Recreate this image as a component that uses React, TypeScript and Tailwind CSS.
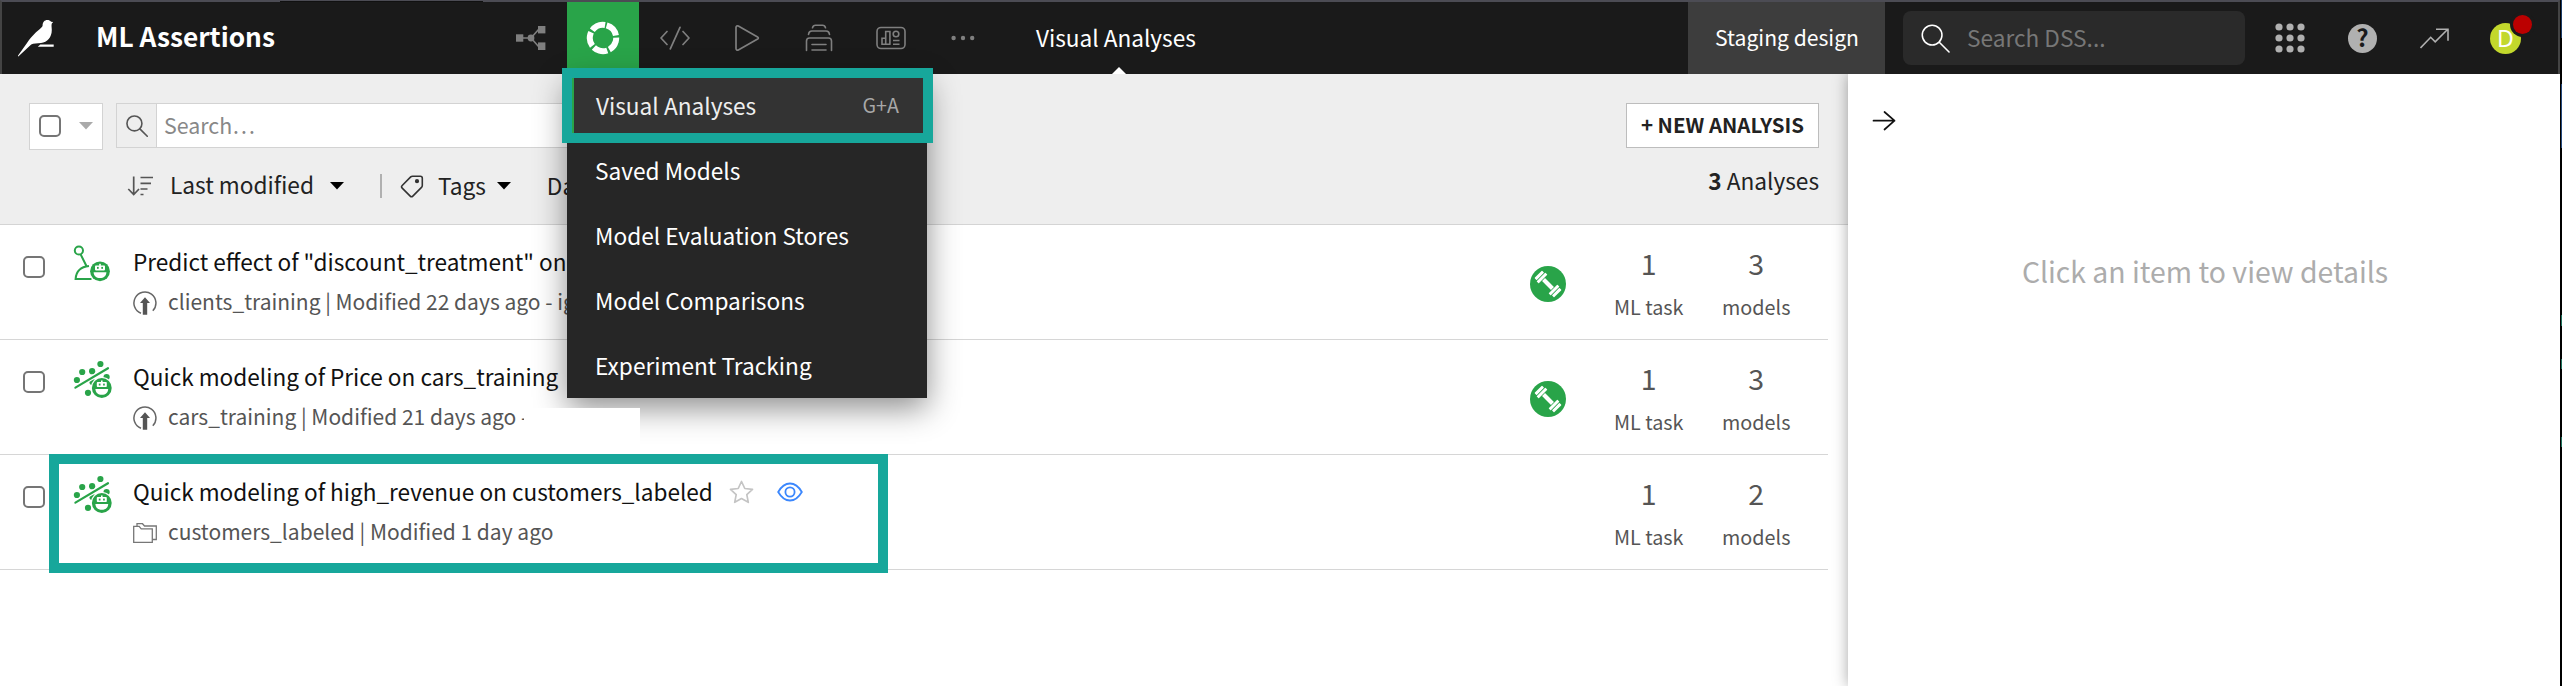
import type { ReactNode } from "react";

const GREEN = "#29a449";

function Bird() {
  return (
    <svg width="38" height="38" viewBox="17 18 38 38" fill="#fff">
      <path d="M42.6 24.5C42.6 21.2 44.6 19 47.2 19c1.8 0 3 .6 3.9 1.8l2.1.2-1.4 1.6c-.6 2 0 3.500 0 6.400 0 7.400-4.500 12.300-10.800 13-4 .5-7.500.2-9.800 1.500L18.300 55.500c-.5-.1-.5-.4-.2-.9l8.900-12.600c2.800-4.200 5.200-6.800 8.500-10.200 3-3 7.100-5.400 7.100-7.300z" />
      <path d="M40.300 43.400h13.400v2.400H37.800z" />
    </svg>
  );
}

function FlowIcon() {
  return (
    <svg width="30" height="26" viewBox="0 0 30 26" fill="#7f7f7f" stroke="#7f7f7f">
      <path d="M4 13h11M15 13l8-9M15 13l8 9" strokeWidth="1.600" fill="none" />
      <g stroke="none">
        <rect x="0" y="9.300" width="7.300" height="7.400" />
        <circle cx="15" cy="13" r="3.400" />
        <rect x="22" y="1" width="7.400" height="7.400" />
        <rect x="22" y="17.400" width="7.400" height="7.600" />
      </g>
    </svg>
  );
}

function RingIcon() {
  return (
    <svg width="34" height="34" viewBox="-17 -17 34 34" fill="none">
      <circle r="13.200" stroke="#fff" strokeWidth="6" strokeDasharray="14.390 2.200" transform="rotate(-74)" />
    </svg>
  );
}

function CodeIcon() {
  return (
    <svg width="30" height="24" viewBox="0 0 30 24" fill="none" stroke="#7f7f7f" strokeWidth="1.700" strokeLinecap="round" strokeLinejoin="round">
      <path d="M7 5.500L1 12l6 6.500M23 5.500L29 12l-6 6.500M20 1.300L10.300 22.800" />
    </svg>
  );
}

function PlayIcon() {
  return (
    <svg width="26" height="28" viewBox="0 0 26 28" fill="none" stroke="#7f7f7f" strokeWidth="1.700" strokeLinejoin="round">
      <path d="M2 3.500v21c0 1.400 1.200 2 2.300 1.400L23.600 15c1-.6 1-1.500 0-2L4.300 2.100C3.200 1.500 2 2.100 2 3.500z" />
    </svg>
  );
}

function StackIcon() {
  return (
    <svg width="28" height="28" viewBox="0 0 28 28" fill="none" stroke="#7f7f7f" strokeWidth="1.600" strokeLinecap="round">
      <path d="M1.500 26.500V17c0-2 1-3 3-3h19c2 0 3 1 3 3v9.500M7 20.500h14M7 26h14" />
      <path d="M3.500 10.500C3.800 8 5 7 6.800 7h14.400c1.800 0 3 1 3.300 3.500M7.500 3.800C7.900 2 8.800 1.200 10.500 1.200h7c1.700 0 2.600.8 3 2.600" />
    </svg>
  );
}

function DashboardIcon() {
  return (
    <svg width="30" height="24" viewBox="0 0 30 24" fill="none" stroke="#7f7f7f" strokeWidth="1.600">
      <rect x="1" y="1.500" width="28" height="21" rx="4" />
      <path d="M6 18.200v-6h3.700v6M9.700 18.200V5.500h4.200v12.700M5.200 18.200h9.400M17 14.500h6.500M17 18.200h6.500" />
      <circle cx="20" cy="8" r="2.800" />
    </svg>
  );
}

function DotsIcon() {
  return (
    <svg width="24" height="6" viewBox="0 0 24 6" fill="#7f7f7f">
      <circle cx="2.600" cy="3" r="2.200" />
      <circle cx="12" cy="3" r="2.200" />
      <circle cx="21.200" cy="3" r="2.200" />
    </svg>
  );
}

function SearchIcon({ size, color, stroke }: { size: number; color: string; stroke: number }) {
  return (
    <svg width={size} height={size} viewBox="0 0 30 30" fill="none" stroke={color} strokeWidth={stroke} strokeLinecap="round">
      <circle cx="11.500" cy="11.500" r="10.200" />
      <path d="M18.900 18.900L29 29" />
    </svg>
  );
}

function Caret({ color }: { color: string }) {
  return (
    <svg width="14" height="8" viewBox="0 0 14 8" fill={color}>
      <path d="M0 0h14L7 7.500z" />
    </svg>
  );
}

function Robot({ cx, cy }: { cx: number; cy: number }) {
  return (
    <g transform={`translate(${cx} ${cy})`}>
      <circle r="11" fill="#fff" />
      <circle r="9.900" fill={GREEN} />
      <rect x="-0.8" y="-7.500" width="1.600" height="2.500" fill="#fff" />
      <rect x="-5" y="-5.900" width="10" height="5" rx="0.8" fill="#fff" />
      <rect x="-3" y="-4.400" width="1.700" height="1.900" fill={GREEN} />
      <rect x="1.300" y="-4.400" width="1.700" height="1.900" fill={GREEN} />
      <path d="M-6.400 1H6.400C6.200 4.800 3.800 6.800 0 6.800S-6.200 4.800-6.400 1z" fill="#fff" />
    </g>
  );
}

function CausalIcon() {
  return (
    <svg width="40" height="40" viewBox="0 0 40 40" fill="none" stroke={GREEN} strokeWidth="2">
      <circle cx="5.900" cy="5.500" r="4.100" />
      <path d="M7.600 9.300l5.700 11.500M18.500 34H2.600c.5-7 4.400-12 13.400-12.900" />
      <g stroke="none">
        <Robot cx={27} cy={26.300} />
      </g>
    </svg>
  );
}

function RegressionIcon() {
  return (
    <svg width="40" height="40" viewBox="0 0 40 40" fill={GREEN}>
      <circle cx="27.400" cy="4" r="3.100" />
      <circle cx="9.200" cy="12" r="3.100" />
      <circle cx="19.100" cy="11.200" r="3.100" />
      <circle cx="3.900" cy="20" r="3.100" />
      <circle cx="15" cy="32.800" r="3.100" />
      <circle cx="33.600" cy="17" r="3.100" />
      <circle cx="19.500" cy="22" r="3.100" />
      <path d="M2.400 27.600L35 8.200" stroke="#fff" strokeWidth="4.600" />
      <path d="M2.400 27.600L35 8.200" stroke={GREEN} strokeWidth="2.200" strokeLinecap="round" />
      <Robot cx={28.800} cy={28} />
    </svg>
  );
}

function UploadIcon() {
  return (
    <svg width="24" height="24" viewBox="0 0 24 24" fill="none" stroke="#666" strokeWidth="1.500">
      <path d="M8 22.300A11 11 0 1 1 19.800 19.700" />
      <path d="M9.800 23.800V12H7l5-5.800 5 5.800h-2.800v11.800z" fill="#555" stroke="none" />
    </svg>
  );
}

function FoldersIcon() {
  return (
    <svg width="24" height="24" viewBox="0 0 24 24" fill="none" stroke="#777" strokeWidth="1.300">
      <path d="M.7 5.300h5.500l2 2.500h11.100v13.500H.7z" />
      <path d="M4 5V2.700h5.500l2 2.300h11.800v13.500h-4" />
    </svg>
  );
}

function DumbbellIcon() {
  return (
    <svg width="36" height="36" viewBox="-18 -18 36 36">
      <circle r="18" fill={GREEN} />
      <g transform="rotate(45)" fill="#fff">
        <rect x="-6.300" y="-2.100" width="12.600" height="4.200" />
        <rect x="-10" y="-6.200" width="3" height="12.400" rx=".6" />
        <rect x="-13.800" y="-5.300" width="3" height="10.600" rx=".6" />
        <rect x="7" y="-6.200" width="3" height="12.400" rx=".6" />
        <rect x="10.800" y="-5.300" width="3" height="10.600" rx=".6" />
      </g>
    </svg>
  );
}

function Checkbox() {
  return <span className="block size-[22px] shrink-0 rounded-[5px] border-2 border-[#757575] bg-white" />;
}

function NavCell({ active, children }: { active?: boolean; children: ReactNode }) {
  return (
    <div className={active ? "flex h-full w-[72px] items-center justify-center bg-[#29a449]" : "flex h-full w-[72px] items-center justify-center"}>
      {children}
    </div>
  );
}

const menuItems = ["Saved Models", "Model Evaluation Stores", "Model Comparisons", "Experiment Tracking"];

function Menu() {
  return (
    <div className="absolute left-[567px] top-[74px] z-20 flex h-[324px] w-[360px] flex-col bg-[#262626] text-[22.660px] text-white shadow-[0_10px_30px_rgba(0,0,0,0.450)]">
      <div className="flex flex-1 items-center justify-between border-l-[7px] border-[#29a449] bg-[#333] pl-[22px] pr-[28px]">
        <span className="text-[#eee]">Visual Analyses</span>
        <span className="pb-[3px] text-[19.680px] text-[#a8a8a8]">G+A</span>
      </div>
      {menuItems.map((item) => (
        <div key={item} className="flex flex-1 items-center pl-7">
          {item}
        </div>
      ))}
    </div>
  );
}

function Header() {
  return (
    <header className="flex h-[74px] w-[2560px] items-center border-x-2 border-t-2 border-x-[#444] border-t-[#4c4c54] bg-[#1a1a1a] text-white">
      <div className="ml-[15px]">
        <Bird />
      </div>
      <div className="ml-[41px] w-[399px] pb-[2px] text-[26.280px] font-bold">ML Assertions</div>
      <nav className="flex h-full">
        <NavCell><FlowIcon /></NavCell>
        <NavCell active><RingIcon /></NavCell>
        <NavCell><CodeIcon /></NavCell>
        <NavCell><PlayIcon /></NavCell>
        <NavCell><StackIcon /></NavCell>
        <NavCell><DashboardIcon /></NavCell>
        <NavCell><DotsIcon /></NavCell>
      </nav>
      <div className="relative ml-[37px] flex h-full items-center text-[22.600px]">
        Visual Analyses
        <svg className="absolute bottom-0 left-[76px]" width="14" height="7" viewBox="0 0 14 7" fill="#fff">
          <path d="M0 7L7 0l7 7z" />
        </svg>
      </div>
      <div className="ml-auto flex h-full w-[197px] items-center justify-center bg-[#3d3d3d] pb-[2px] pl-[1px] text-[21.140px]">Staging design</div>
      <div className="ml-[18px] flex h-[54px] w-[342px] items-center rounded-[8px] bg-[#2a2a2a] pl-[18px] text-[22.660px] text-[#777]">
        <SearchIcon size={29} color="#fff" stroke={1.600} />
        <span className="ml-[17px]">Search DSS...</span>
      </div>
      <svg className="ml-[30px]" width="30" height="30" viewBox="0 0 30 30" fill="#b0b0b0">
        {[4, 15, 26].map((y) => [4, 15, 26].map((x) => <circle key={`${x}-${y}`} cx={x} cy={y} r="3.600" />))}
      </svg>
      <div className="ml-[43px] flex size-[29px] items-center justify-center rounded-full bg-[#b0b0b0] text-[24px] font-bold leading-none text-[#1a1a1a]">
        <span className="pb-[2px]">?</span>
      </div>
      <svg className="ml-[43px]" width="32" height="24" viewBox="1.500 0 32 24" fill="none" stroke="#b0b0b0" strokeWidth="1.600">
        <path d="M2 22L12.200 11.300l4.500 4.500L29.500 3M17.500 3.300h12v11.500" />
      </svg>
      <div className="relative ml-[38px] mr-[37px] flex size-[31px] items-center justify-center rounded-full bg-[#c3d82c] font-['Noto_Sans'] text-[23px] leading-none">
        <span>D</span>
        <span className="absolute left-[20px] top-[-11px] size-[25px] rounded-full bg-[#1a1a1a] p-[3px]">
          <span className="block size-[19px] rounded-full bg-[#bb0000]" />
        </span>
      </div>
    </header>
  );
}

function Toolbar() {
  return (
    <div className="flex h-[151px] justify-between border-b border-[#d4d4d4] bg-[#eee] px-[29px] pt-[29px] text-[22.660px] text-[#222]">
      <div className="flex flex-col">
        <div className="flex h-[47px] items-start">
          <div className="flex h-[47px] w-[74px] items-center border border-[#d3d3d3] bg-white pb-[1px] pl-[9px]">
            <Checkbox />
            <span className="ml-[18px]"><Caret color="#aaa" /></span>
          </div>
          <div className="ml-[13px] flex h-[45px] w-[500px] border border-[#d3d3d3] bg-white">
            <div className="flex w-[40px] items-center justify-center border-r border-[#d3d3d3] bg-[#eee]">
              <SearchIcon size={22} color="#555" stroke={2.200} />
            </div>
            <span className="flex items-center pb-[1px] pl-[7px] text-[21.370px] text-[#888]">Search…</span>
          </div>
        </div>
        <div className="mt-[16px] flex h-[40px] items-center pl-[98px]">
          <svg width="27" height="22" viewBox="0 0 27 22" fill="none" stroke="#555" strokeWidth="1.700">
            <path d="M6.700 1.500v18M1.300 14l5.400 5.500L12 14M13.500 2.500H26M13.500 8.300h10.500M13.500 14h7M13.500 19.500h3" />
          </svg>
          <span className="ml-[16px] pb-[2px]">Last modified</span>
          <span className="ml-[16px]"><Caret color="#000" /></span>
          <span className="ml-[36px] h-6 w-[2px] bg-[#b0b0b0]" />
          <svg className="ml-[18px]" width="24" height="24" viewBox="0 0 24 24" fill="none" stroke="#333" strokeWidth="1.600" strokeLinejoin="round">
            <path d="M12.500 2.200h7.800c1.400 0 2 .8 2 2v7.300c0 .8-.3 1.300-.8 1.900l-8.700 8.700c-.8.800-1.800.8-2.600 0l-8-8c-.8-.8-.8-1.800 0-2.600l8.500-8.600c.5-.5 1-.7 1.800-.7z" />
            <circle cx="17" cy="7.200" r="1.300" fill="#333" />
          </svg>
          <span className="ml-[14px]">Tags</span>
          <span className="ml-[11px]"><Caret color="#000" /></span>
          <span className="ml-[36px]">Date</span>
        </div>
      </div>
      <div className="flex flex-col items-end">
        <div className="flex h-[45px] w-[193px] items-center justify-center whitespace-nowrap border border-[#bdbdbd] bg-white pb-[2px] text-[20.480px] font-bold">+ NEW ANALYSIS</div>
        <div className="mt-[17px] h-8 whitespace-nowrap leading-8">
          <span className="font-bold">3</span> Analyses
        </div>
      </div>
    </div>
  );
}

function Stat({ value, label }: { value: string; label: string }) {
  return (
    <div className="flex w-[107.500px] flex-col items-center whitespace-nowrap pt-[18px] text-[#555]">
      <span className="text-[28.500px] leading-[40px]">{value}</span>
      <span className="mt-2 text-[19.770px] leading-8">{label}</span>
    </div>
  );
}

type Row = { icon: ReactNode; title: string; source: string; sourceIcon: ReactNode; models: string; training: boolean; actions?: boolean };

const rows: Row[] = [
  { icon: <CausalIcon />, title: 'Predict effect of "discount_treatment" on', source: "clients_training | Modified 22 days ago - ig", sourceIcon: <UploadIcon />, models: "3", training: true },
  { icon: <RegressionIcon />, title: "Quick modeling of Price on cars_training", source: "cars_training | Modified 21 days ago -", sourceIcon: <UploadIcon />, models: "3", training: true },
  { icon: <RegressionIcon />, title: "Quick modeling of high_revenue on customers_labeled", source: "customers_labeled | Modified 1 day ago", sourceIcon: <FoldersIcon />, models: "2", training: false, actions: true },
];

function AnalysisRow({ row }: { row: Row }) {
  return (
    <div className="flex h-[115px] w-[1828px] border-b border-[#d6d6d6] pl-[23px] pr-[18px]">
      <div className="pt-[31px]"><Checkbox /></div>
      <div className="ml-[28px] pt-[20px]">{row.icon}</div>
      <div className="ml-[19px] flex-1 whitespace-nowrap pt-[21px]">
        <div className="flex h-8 items-center pl-[1px] text-[22.590px] leading-8 text-[#111]">
          {row.title}
          {row.actions && (
            <>
              <svg className="ml-[16px]" width="25" height="24" viewBox="0 0 25 24" fill="none" stroke="#c4c4c4" strokeWidth="1.700" strokeLinejoin="round">
                <path d="M12.500 1.500l3.300 7 7.700.9-5.700 5.200 1.500 7.700-6.800-3.800-6.800 3.800 1.500-7.700L1.500 9.400l7.700-.9z" />
              </svg>
              <svg className="ml-[23px]" width="26" height="20" viewBox="0 0 26 20" fill="none" stroke="#3b87fd" strokeWidth="1.800">
                <path d="M1.200 10C4.500 4.300 8.500 1.500 13 1.500S21.500 4.300 24.800 10C21.500 15.700 17.500 18.500 13 18.500S4.500 15.700 1.200 10z" />
                <circle cx="13" cy="10" r="4.600" />
              </svg>
            </>
          )}
        </div>
        <div className="-mt-px flex h-12 items-center text-[21px] leading-[48px] text-[#555]">
          <span className="mr-[11px] pl-[1px] pt-[3px]">{row.sourceIcon}</span>
          {row.source}
        </div>
      </div>
      {row.training && <div className="mr-[29px] pt-[41px]"><DumbbellIcon /></div>}
      <Stat value="1" label="ML task" />
      <Stat value={row.models} label="models" />
    </div>
  );
}

function WindowEdge() {
  return (
    <div className="flex h-[686px] w-[2px] flex-col items-end bg-black">
      <span className="h-[38px] w-px bg-[#1b3a66]" />
      <span className="mt-[46px] h-[64px] w-px bg-[#24487c]" />
      <span className="mt-[167px] h-[11px] w-px bg-[#1c6e5a]" />
      <span className="mt-[33px] h-[10px] w-px bg-[#1c6e5a]" />
      <span className="mt-[68px] h-[10px] w-px bg-[#1c6e5a]" />
    </div>
  );
}

export default function App() {
  return (
    <div className="relative flex h-[686px] w-[2562px] overflow-hidden bg-white font-['Noto_Sans_CJK_SC',sans-serif]">
      <div className="flex w-[2560px] flex-col">
        <Header />
        <div className="flex flex-1">
          <main className="w-[1848px]">
            <Toolbar />
            {rows.map((row) => (
              <AnalysisRow key={row.title} row={row} />
            ))}
          </main>
          <aside className="relative flex-1 bg-white pt-[36px] shadow-[0_0_14px_rgba(0,0,0,0.350)] [clip-path:inset(0_0_0_-20px)]">
            <svg className="ml-[24px]" width="24" height="22" viewBox="0 0 24 22" fill="none" stroke="#111" strokeWidth="1.700" strokeLinecap="round" strokeLinejoin="round">
              <path d="M1.500 10.700H22.500M12.500 2l10 8.700-10 8.800" />
            </svg>
            <div className="mt-[119px] pl-[2px] text-center text-[28.400px] leading-10 text-[#acacac]">Click an item to view details</div>
          </aside>
        </div>
      </div>
      <WindowEdge />
      <Menu />
      <div className="absolute left-[524px] top-[408px] z-20 h-[43px] w-[116px] bg-white" />
      <div className="absolute left-[280px] top-px h-px w-[203px] bg-[#111]" />
      <div className="absolute left-[562px] top-[68px] z-30 h-[75px] w-[371px] border-[10px] border-[#17a79b]" />
      <div className="absolute left-[49px] top-[454px] z-30 h-[119px] w-[839px] border-[10px] border-[#17a79b]" />
    </div>
  );
}
